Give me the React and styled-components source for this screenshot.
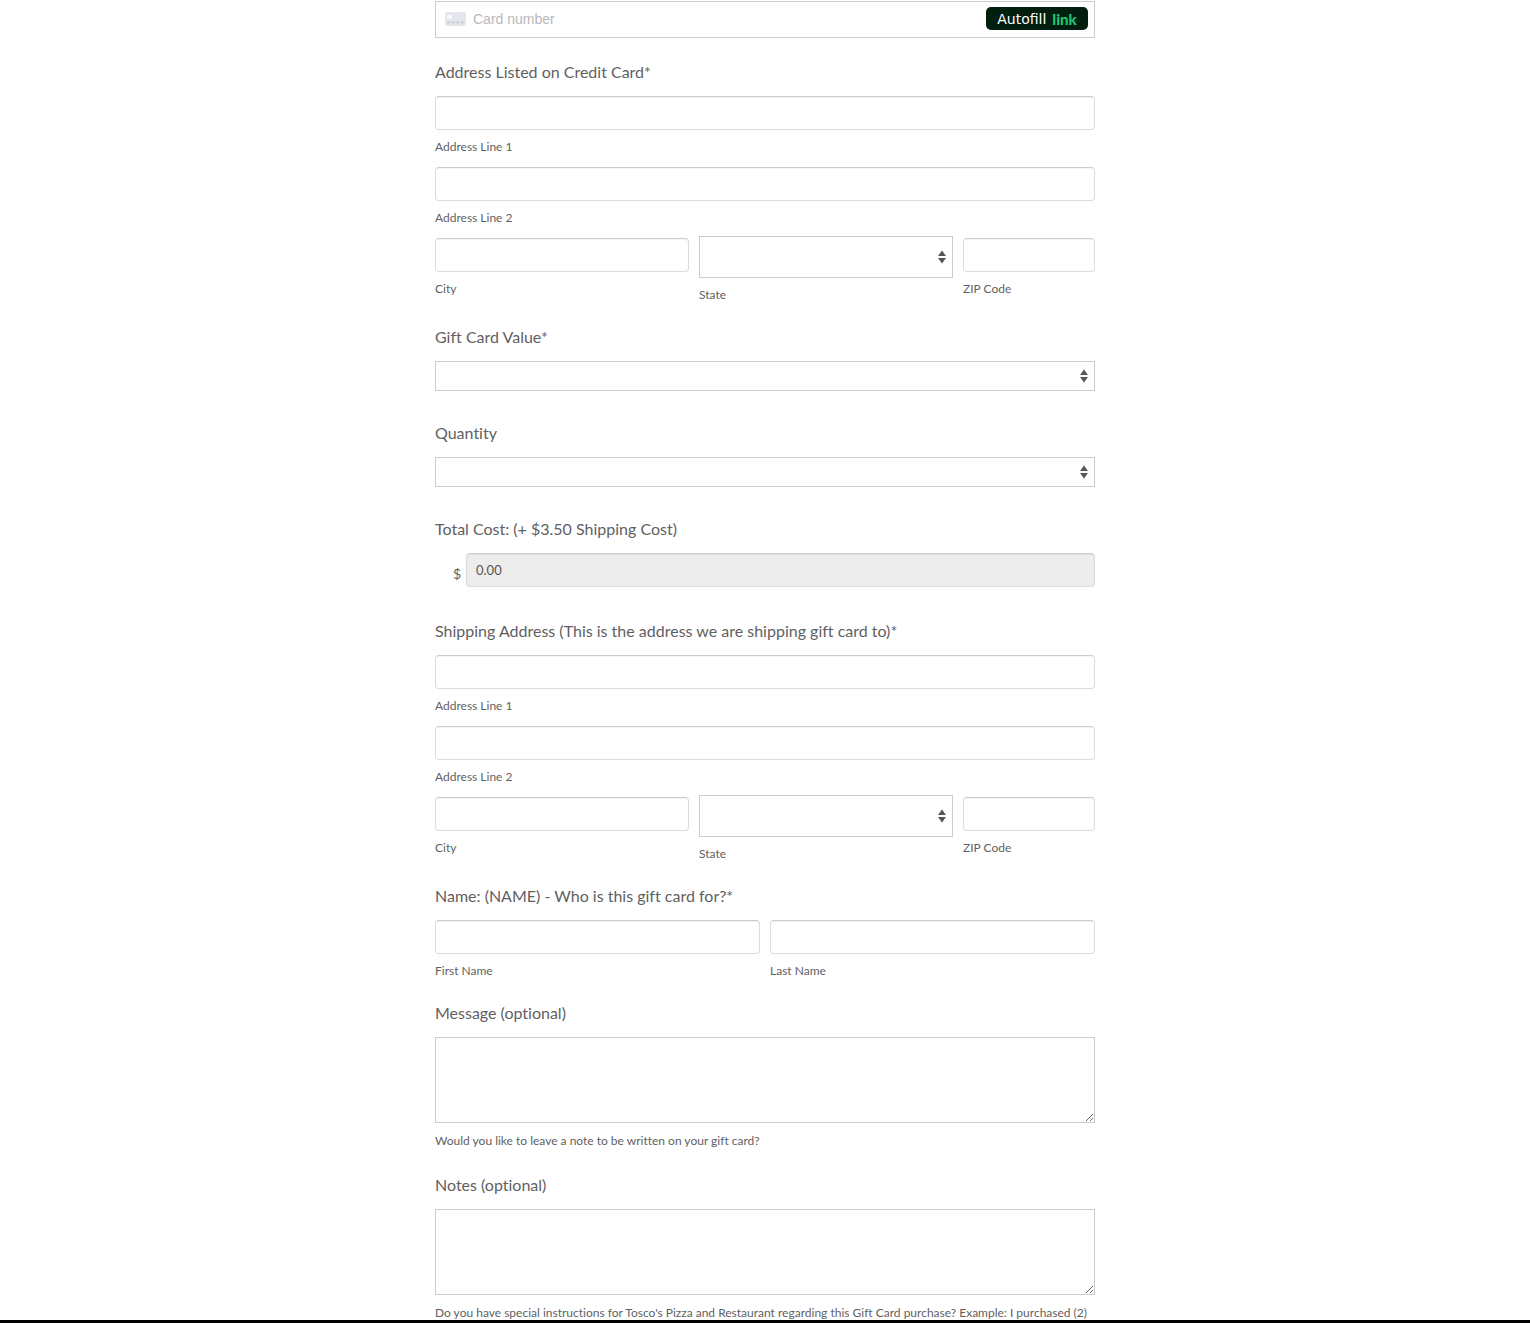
import { useId } from "react";
import styled, { createGlobalStyle } from "styled-components";

const GlobalStyle = createGlobalStyle`
  *, *::before, *::after {
    box-sizing: border-box;
  }

  body {
    margin: 0;
    background: #fff;
    color: #5f5f63;
    font-family: "Lato", "Liberation Sans", sans-serif;
    font-size: 16px;
    font-variant-ligatures: no-common-ligatures;
  }
`;

const SelectArrows = () => (
  <Arrows viewBox="0 0 8 14" aria-hidden="true">
    <path d="M4 0.5 L8 6 H0 Z" fill="#555" />
    <path d="M4 13.5 L8 8 H0 Z" fill="#555" />
  </Arrows>
);

const CardIcon = () => (
  <svg width="21" height="14" viewBox="0 0 21 14" aria-hidden="true">
    <rect width="21" height="14" rx="2" fill="#e3e6eb" />
    <rect x="2" y="3" width="5" height="4" rx="1" fill="#f8f9fa" />
    <path
      d="M2 10.5 h3 M6.500 10.5 h3 M11 10.5 h3 M15.500 10.5 h3"
      stroke="#c3c8d1"
      strokeWidth="1.500"
    />
  </svg>
);

const TextField = ({ caption }) => {
  const id = useId();
  return (
    <div>
      <Input id={id} type="text" />
      <Caption htmlFor={id}>{caption}</Caption>
    </div>
  );
};

const StateField = () => {
  const id = useId();
  return (
    <StateColumn>
      <SelectBox>
        <Select id={id} $tall defaultValue="">
          <option value="" />
          <option>MI</option>
        </Select>
        <SelectArrows />
      </SelectBox>
      <Caption htmlFor={id}>State</Caption>
    </StateColumn>
  );
};

const SelectField = ({ label, options }) => {
  const id = useId();
  return (
    <Field $gap={30}>
      <Label htmlFor={id}>{label}</Label>
      <SelectBox>
        <Select id={id} defaultValue="">
          <option value="" />
          {options.map((option) => (
            <option key={option}>{option}</option>
          ))}
        </Select>
        <SelectArrows />
      </SelectBox>
    </Field>
  );
};

const AddressField = ({ label }) => (
  <Group>
    <Legend>{label}</Legend>
    <Stack>
      <TextField caption="Address Line 1" />
      <TextField caption="Address Line 2" />
      <CityRow>
        <TextField caption="City" />
        <StateField />
        <TextField caption="ZIP Code" />
      </CityRow>
    </Stack>
  </Group>
);

const MessageField = ({ label, hint }) => {
  const id = useId();
  return (
    <Field $gap={22}>
      <Label htmlFor={id}>{label}</Label>
      <TextArea id={id} aria-describedby={`${id}-hint`} />
      <Hint id={`${id}-hint`}>{hint}</Hint>
    </Field>
  );
};

const App = () => {
  return (
    <Page>
      <GlobalStyle />
      <Content>
        <Form onSubmit={(e) => e.preventDefault()}>
          <CardBox>
            <CardIcon />
            <CardInput
              type="text"
              inputMode="numeric"
              placeholder="Card number"
              aria-label="Card number"
            />
            <AutofillButton type="button">
              Autofill <LinkMark>link</LinkMark>
            </AutofillButton>
          </CardBox>

          <AddressField label="Address Listed on Credit Card*" />
          <SelectField
            label="Gift Card Value*"
            options={["$25.00", "$50.00", "$100.00"]}
          />
          <SelectField label="Quantity" options={["1", "2", "3"]} />

          <Field $gap={30}>
            <Label htmlFor="total">Total Cost: (+ $3.50 Shipping Cost)</Label>
            <TotalRow>
              <Currency>$</Currency>
              <Input id="total" type="text" value="0.00" readOnly />
            </TotalRow>
          </Field>

          <AddressField label="Shipping Address (This is the address we are shipping gift card to)*" />

          <Group>
            <Legend>Name: (NAME) - Who is this gift card for?*</Legend>
            <NameRow>
              <TextField caption="First Name" />
              <TextField caption="Last Name" />
            </NameRow>
          </Group>

          <MessageField
            label="Message (optional)"
            hint="Would you like to leave a note to be written on your gift card?"
          />
          <MessageField
            label="Notes (optional)"
            hint="Do you have special instructions for Tosco's Pizza and Restaurant regarding this Gift Card purchase? Example: I purchased (2)"
          />
        </Form>
      </Content>
      <BottomBar />
    </Page>
  );
};

const Page = styled.div`
  display: flex;
  flex-direction: column;
  height: 100vh;
`;

const Content = styled.main`
  flex: 1;
  min-height: 0;
  overflow: hidden;
`;

const BottomBar = styled.footer`
  flex: none;
  height: 3px;
  background: #000;
`;

const Form = styled.form`
  max-width: 660px;
  margin: 0 auto;
  padding-top: 1px;
`;

const CardBox = styled.div`
  display: flex;
  align-items: center;
  height: 37px;
  margin-bottom: 22px;
  padding: 0 6px 2px 9px;
  border: 1px solid #ccc;
`;

const CardInput = styled.input`
  flex: 1;
  min-width: 0;
  padding: 0 7px;
  border: 0;
  outline: 0;
  background: transparent;
  font: 14px "Liberation Sans", Arial, sans-serif;

  &::placeholder {
    color: #b8b8bb;
  }
`;

const AutofillButton = styled.button`
  display: flex;
  align-items: center;
  justify-content: center;
  gap: 6px;
  width: 102px;
  height: 23px;
  padding: 0;
  border: 0;
  border-radius: 5px;
  background: #011e0f;
  color: #fff;
  font: 14px "DejaVu Sans", sans-serif;
  cursor: pointer;
`;

const LinkMark = styled.span`
  color: #1fc46f;
  font: 900 15px "Lato", sans-serif;
`;

const Field = styled.div`
  margin-bottom: ${({ $gap }) => $gap}px;
`;

const Group = styled.fieldset`
  min-width: 0;
  margin: 0 0 21px;
  padding: 0;
  border: 0;
`;

const Label = styled.label`
  display: block;
  margin-bottom: 12px;
  line-height: 24px;
`;

const Legend = styled.legend`
  margin-bottom: 12px;
  padding: 0;
  line-height: 24px;
`;

const Stack = styled.div`
  display: flex;
  flex-direction: column;
  gap: 11px;
`;

const CityRow = styled.div`
  display: grid;
  grid-template-columns: calc(40% - 10px) calc(40% - 10px) 20%;
  column-gap: 10px;
  align-items: start;
`;

const NameRow = styled.div`
  display: grid;
  grid-template-columns: 1fr 1fr;
  column-gap: 10px;
`;

const StateColumn = styled.div`
  margin-top: -2px;
`;

const Input = styled.input`
  display: block;
  width: 100%;
  height: 34px;
  padding: 0 9px;
  border: 1px solid #dcdcdc;
  border-top-color: #ccc;
  border-radius: 4px;
  background: #fff;
  box-shadow: inset 0 1px 1px rgba(0, 0, 0, 0.05);
  color: #555;
  font: 13px "Lato", sans-serif;

  &:read-only {
    background: #ededed;
  }
`;

const Caption = styled.label`
  display: block;
  margin-top: 8px;
  font-size: 12px;
  line-height: 18px;
`;

const SelectBox = styled.div`
  position: relative;
`;

const Select = styled.select`
  display: block;
  width: 100%;
  height: ${({ $tall }) => ($tall ? 42 : 30)}px;
  padding: 0 24px 0 9px;
  border: 1px solid #ccc;
  border-radius: 0;
  background: #fff;
  color: #555;
  font: 13px "Lato", sans-serif;
  appearance: none;
`;

/* sits over the native select, so clicks have to pass through */
const Arrows = styled.svg`
  position: absolute;
  top: 50%;
  right: 7px;
  width: 8px;
  height: 14px;
  margin-top: -7px;
  pointer-events: none;
`;

const TotalRow = styled.div`
  display: flex;
  height: 36px;
`;

const Currency = styled.span`
  flex: none;
  align-self: flex-end;
  width: 31px;
  padding-right: 5px;
  font-size: 14px;
  line-height: 30px;
  text-align: right;
`;

const TextArea = styled.textarea`
  display: block;
  width: 100%;
  height: 86px;
  padding: 8px;
  border: 1px solid #ccc;
  border-radius: 0;
  color: #555;
  font: 13px "Lato", sans-serif;
  resize: both;
`;

const Hint = styled.p`
  margin: 8px 0 0;
  font-size: 12px;
  line-height: 20px;
`;

export default App;
